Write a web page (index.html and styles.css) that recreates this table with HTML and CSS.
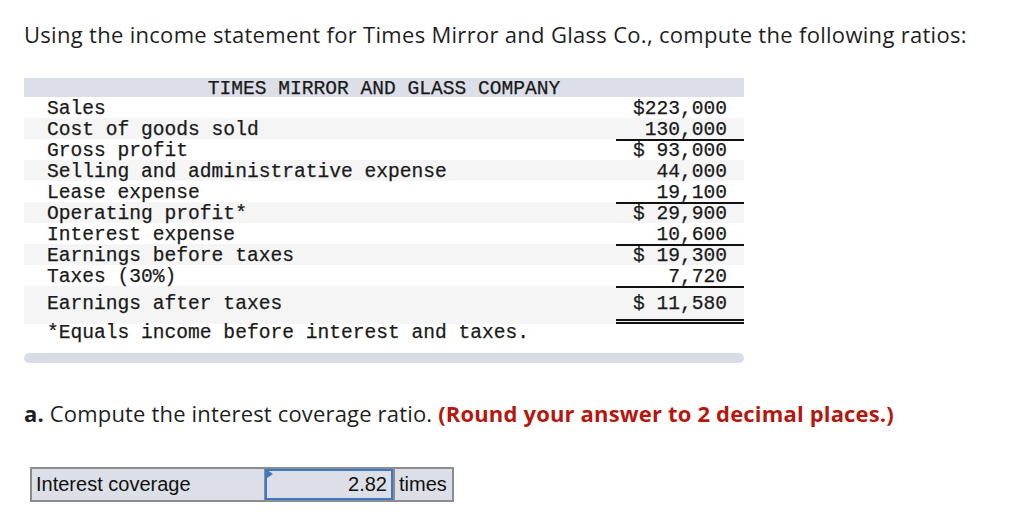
FILE: index.html
```html
<!DOCTYPE html>
<html>
<head>
<meta charset="utf-8">
<link rel="stylesheet" href="styles.css">
</head>
<body>
<div class="page">
  <p class="intro">Using the income statement for Times Mirror and Glass Co., compute the following ratios:</p>

  <div class="statement">
    <div class="fin">
      <div class="fin-head">TIMES MIRROR AND GLASS COMPANY</div>
      <div class="row"><div class="lbl">Sales</div><div class="val">$223,000</div></div>
      <div class="row alt"><div class="lbl">Cost of goods sold</div><div class="val">130,000</div></div>
      <div class="row"><div class="lbl">Gross profit</div><div class="val rule">$ 93,000</div></div>
      <div class="row alt"><div class="lbl">Selling and administrative expense</div><div class="val">44,000</div></div>
      <div class="row"><div class="lbl">Lease expense</div><div class="val">19,100</div></div>
      <div class="row alt"><div class="lbl">Operating profit*</div><div class="val rule">$ 29,900</div></div>
      <div class="row"><div class="lbl">Interest expense</div><div class="val">10,600</div></div>
      <div class="row alt"><div class="lbl">Earnings before taxes</div><div class="val rule">$ 19,300</div></div>
      <div class="row"><div class="lbl">Taxes (30%)</div><div class="val">7,720</div></div>
      <div class="row alt total"><div class="lbl">Earnings after taxes</div><div class="val rule dbl">$ 11,580</div></div>
      <div class="row note"><div class="lbl">*Equals income before interest and taxes.</div></div>
    </div>
    <div class="scrollbar"></div>
  </div>

  <p class="question"><b>a.</b> Compute the interest coverage ratio. <span class="hint">(Round your answer to 2 decimal places.)</span></p>

  <div class="answer">
    <div class="a-label">Interest coverage</div>
    <div class="a-input"><span class="flag"></span>2.82</div>
    <div class="a-unit">times</div>
  </div>
</div>
</body>
</html>
```

FILE: styles.css
```css
html, body {
  margin: 0;
  padding: 0;
  background: #ffffff;
}

.page {
  padding: 21px 0 0 24px;
  font-family: "Open Sans", "Liberation Sans", sans-serif;
  color: #222;
}

.intro {
  margin: 0;
  font-size: 22px;
  line-height: 26px;
  letter-spacing: 0.3px;
  color: #1f1f1f;
}

.statement {
  width: 720px;
  margin-top: 31px;
}

.fin {
  width: 720px;
  font-family: "Liberation Mono", "Courier New", monospace;
  font-size: 19.6px;
  color: #1a1a1a;
  -webkit-text-stroke: 0.25px #1a1a1a;
}

.fin-head {
  background: #dcdfe7;
  height: 19px;
  box-sizing: border-box;
  padding-top: 3px;
  line-height: 17px;
  text-align: center;
  white-space: pre;
}

.row {
  display: flex;
  height: 21px;
}

.row.alt {
  background: #f5f5f5;
}

.lbl {
  flex: 1;
  box-sizing: border-box;
  padding: 4px 0 0 23px;
  line-height: 17px;
  white-space: pre;
}

.val {
  width: 128px;
  box-sizing: border-box;
  padding: 4px 17px 0 0;
  line-height: 17px;
  text-align: right;
  white-space: pre;
}

.val.rule {
  border-top: 2px solid #111;
  padding-top: 2px;
}

.row.total {
  height: 38px;
}

.row.total .lbl {
  padding-top: 4px;
  line-height: 29px;
}

.row.total .val {
  padding-top: 2px;
  line-height: 29px;
  border-bottom: 5px double #111;
}

.row.note {
  height: 20px;
}

.row.note .lbl {
  padding-top: 1px;
}

.scrollbar {
  margin-top: 9px;
  height: 10px;
  border-radius: 5px;
  background: #d9dce4;
}

.question {
  margin: 37px 0 0 0;
  font-size: 22px;
  line-height: 26px;
  letter-spacing: 0.17px;
  color: #1f1f1f;
}

.question b {
  font-weight: bold;
}

.hint {
  color: #b5180f;
  font-weight: bold;
}

.answer {
  display: flex;
  margin: 41px 0 0 6px;
  width: 424px;
  height: 35px;
  border: 2px solid #8c8c8c;
  box-sizing: border-box;
  background: #dcdfe7;
  font-family: "Liberation Sans", Arial, sans-serif;
  font-size: 20px;
  color: #111;
}

.a-label {
  width: 233px;
  padding-left: 4px;
  box-sizing: border-box;
  line-height: 31px;
  border-right: 1px solid #8c8c8c;
}

.a-input {
  position: relative;
  width: 128px;
  box-sizing: border-box;
  border: 2px solid #3c78c3;
  text-align: right;
  padding-right: 4px;
  line-height: 27px;
}

.flag {
  position: absolute;
  left: 0;
  top: 0;
  width: 0;
  height: 0;
  border-top: 4px solid transparent;
  border-bottom: 4px solid transparent;
  border-left: 6px solid #3c78c3;
  transform: translateY(-1px);
}

.a-unit {
  flex: 1;
  border-left: 2px solid #8c8c8c;
  padding-left: 4px;
  line-height: 31px;
}
```
